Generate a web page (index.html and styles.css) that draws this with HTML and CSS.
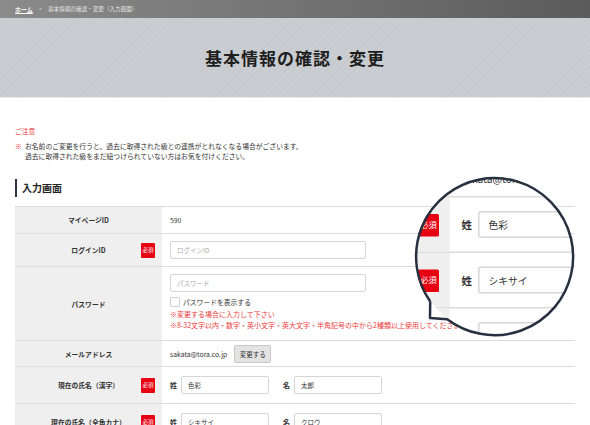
FILE: index.html
```html
<!DOCTYPE html>
<html lang="ja">
  <head>
    <meta charset="UTF-8" />
    <meta name="viewport" content="width=device-width, initial-scale=1.0" />
    <link rel="stylesheet" href="styles.css">
    <title>基本情報の確認・変更</title>
  </head>
  <body>
    <div class="page">
      <div class="breadcrumb">
        <a href="#">ホーム</a>
        <span class="sep">&gt;</span>
        <span>基本情報の確認・変更（入力画面）</span>
      </div>

      <div class="hero">
        <h1>基本情報の確認・変更</h1>
      </div>

      <div class="content">
        <p class="caution-title">ご注意</p>
        <div class="caution">
          <span class="mark">※</span>
          <p>お名前のご変更を行うと、過去に取得された級との連携がとれなくなる場合がございます。<br>過去に取得された級をまだ紐つけられていない方はお気を付けください。</p>
        </div>

        <h2 class="section-title">入力画面</h2>

        <div class="form-table">
          <div class="row row-id">
            <div class="row-label">マイページID</div>
            <div class="row-value">590</div>
          </div>
          <div class="row row-login">
            <div class="row-label">ログインID<span class="required">必須</span></div>
            <div class="row-value">
              <input class="field field-wide" type="text" placeholder="ログインID">
            </div>
          </div>
          <div class="row row-pass">
            <div class="row-label">パスワード</div>
            <div class="row-value stack">
              <input class="field field-wide" type="text" placeholder="パスワード">
              <label class="check"><span class="box"></span>パスワードを表示する</label>
              <p class="note">※変更する場合に入力して下さい</p>
              <p class="note">※8-32文字以内・数字・英小文字・英大文字・半角記号の中から2種類以上使用してください</p>
            </div>
          </div>
          <div class="row row-mail">
            <div class="row-label">メールアドレス</div>
            <div class="row-value">sakata@tora.co.jp<button class="btn">変更する</button></div>
          </div>
          <div class="row row-name">
            <div class="row-label">現在の氏名（漢字）<span class="required">必須</span></div>
            <div class="row-value">
              <span class="name-key">姓</span><input class="field field-name" type="text" value="色彩">
              <span class="name-key gap">名</span><input class="field field-name" type="text" value="太郎">
            </div>
          </div>
          <div class="row row-name">
            <div class="row-label">現在の氏名（全角カナ）<span class="required">必須</span></div>
            <div class="row-value">
              <span class="name-key">姓</span><input class="field field-name" type="text" value="シキサイ">
              <span class="name-key gap">名</span><input class="field field-name" type="text" value="クロウ">
            </div>
          </div>
        </div>
      </div>

      <!-- 拡大ルーペ -->
      <div class="loupe">
        <div class="loupe-inner">
          <div class="form-table">
            <div class="row row-mail">
              <div class="row-label">メールアドレス</div>
              <div class="row-value">sakata@tora.co.jp<button class="btn">変更する</button></div>
            </div>
            <div class="row row-name">
              <div class="row-label">現在の氏名（漢字）<span class="required">必須</span></div>
              <div class="row-value">
                <span class="name-key">姓</span><input class="field field-name" type="text" value="色彩">
                <span class="name-key gap">名</span><input class="field field-name" type="text" value="太郎">
              </div>
            </div>
            <div class="row row-name">
              <div class="row-label">現在の氏名（全角カナ）<span class="required">必須</span></div>
              <div class="row-value">
                <span class="name-key">姓</span><input class="field field-name" type="text" value="シキサイ">
                <span class="name-key gap">名</span><input class="field field-name" type="text" value="クロウ">
              </div>
            </div>
            <div class="row row-name">
              <div class="row-label">旧姓<span class="required">必須</span></div>
              <div class="row-value">
                <span class="name-key">姓</span><input class="field field-name" type="text">
              </div>
            </div>
          </div>
        </div>
      </div>
      <svg class="loupe-frame" width="590" height="425" viewBox="0 0 590 425">
        <path d="M430.2 301.5 L430 318 L447.2 319.2 Z" fill="#fff"/>
        <path d="M430.2 301.5 L430 318 L447.2 319.2 A78.5 78.5 0 1 0 430.2 301.5" fill="none" stroke="#27303e" stroke-width="2.5" stroke-linejoin="round"/>
      </svg>
    </div>
  </body>
</html>
```

FILE: styles.css
```css
* {
  box-sizing: border-box;
}
body {
  margin: 0;
  background: #fff;
  font-family: "Noto Sans CJK JP", "Noto Sans", sans-serif;
  color: #333;
}
p {
  margin: 0;
}
.page {
  position: relative;
  width: 590px;
  height: 425px;
  overflow: hidden;
}

/* パンくず */
.breadcrumb {
  height: 18px;
  padding-left: 15px;
  display: flex;
  align-items: center;
  gap: 6px;
  font-size: 5.6px;
  color: #e6e6e6;
  background: linear-gradient(to right, #8b8b8b, #5b5b5b);
}
.breadcrumb a {
  color: #fff;
  font-weight: 700;
  font-size: 6px;
}
.breadcrumb .sep {
  color: #ccc;
}

/* タイトル */
.hero {
  height: 80px;
  display: flex;
  align-items: center;
  justify-content: center;
  border-bottom: 1px solid #e9eaec;
  background: repeating-linear-gradient(135deg, #cacdd1 0 3px, #c5c8cc 3px 4px);
}
.hero h1 {
  margin: 0;
  font-size: 17px;
  letter-spacing: 1px;
  font-weight: 700;
  color: #1e1e1e;
}

.content {
  padding: 0 15px;
}
.caution-title {
  margin-top: 28px;
  font-size: 6.8px;
  line-height: 10px;
  color: #e83a3a;
}
.caution {
  display: flex;
  margin-top: 6px;
  font-size: 6.8px;
  line-height: 9.5px;
}
.caution .mark {
  width: 10px;
  color: #e83a3a;
}
.section-title {
  margin: 18px 0 9px;
  padding-left: 5px;
  height: 18px;
  line-height: 18px;
  border-left: 2.5px solid #2b3444;
  font-size: 10px;
  font-weight: 700;
  color: #222;
}

/* フォーム */
.form-table {
  width: 560px;
}
.row {
  display: flex;
  border-top: 1px solid #dcdcdc;
}
.row-id { height: 27px; }
.row-login { height: 33px; }
.row-pass { height: 74px; }
.row-mail { height: 26px; }
.row-name { height: 37px; }

.row-label {
  position: relative;
  width: 147px;
  flex-shrink: 0;
  display: flex;
  align-items: center;
  justify-content: center;
  background: #efefef;
  font-size: 6.8px;
  font-weight: 700;
  color: #333;
}
.required {
  position: absolute;
  right: 7px;
  top: 50%;
  margin-top: -7.5px;
  width: 14px;
  height: 15px;
  border-radius: 1px;
  background: #e60012;
  color: #fff;
  font-size: 5.5px;
  font-weight: 400;
  line-height: 15px;
  text-align: center;
}
.row-value {
  flex: 1;
  display: flex;
  align-items: center;
  padding: 0 8px;
  font-size: 6.8px;
  color: #333;
}
.row-value.stack {
  flex-direction: column;
  align-items: flex-start;
  justify-content: flex-start;
  padding-top: 7px;
}
.field {
  height: 18px;
  padding: 0 6px;
  border: 1px solid #d6d6d6;
  border-radius: 2px;
  font-family: inherit;
  font-size: 6.5px;
  color: #333;
  background: #fff;
  outline: none;
}
.field::placeholder {
  color: #aaa;
}
.field-wide {
  width: 196px;
}
.field-name {
  width: 88px;
  margin-left: 4px;
}
.name-key {
  font-weight: 700;
  font-size: 7px;
}
.name-key.gap {
  margin-left: 14px;
}
.check {
  display: flex;
  align-items: center;
  gap: 3px;
  margin-top: 5px;
  font-size: 6.8px;
}
.check .box {
  width: 10px;
  height: 10px;
  border: 1px solid #d0d0d0;
  border-radius: 1px;
  background: #fff;
}
.note {
  margin-top: 1px;
  font-size: 7px;
  line-height: 9.5px;
  color: #ee3b3b;
  white-space: nowrap;
}
.check + .note {
  margin-top: 3px;
}
.btn {
  margin-left: 7px;
  width: 37px;
  height: 18px;
  padding: 0;
  border: 1px solid #c9c9c9;
  border-radius: 2px;
  background: #e3e3e3;
  font-family: inherit;
  font-size: 6.5px;
  color: #333;
}

/* ルーペ */
.loupe {
  position: absolute;
  left: 415px;
  top: 177px;
  width: 159px;
  height: 159px;
  border-radius: 50%;
  overflow: hidden;
  background: #fff;
}
.loupe-inner {
  position: absolute;
  left: -186px;
  top: -20px;
  transform: scale(1.5);
  transform-origin: 0 0;
}
.loupe-frame {
  position: absolute;
  left: 0;
  top: 0;
  pointer-events: none;
}
```
